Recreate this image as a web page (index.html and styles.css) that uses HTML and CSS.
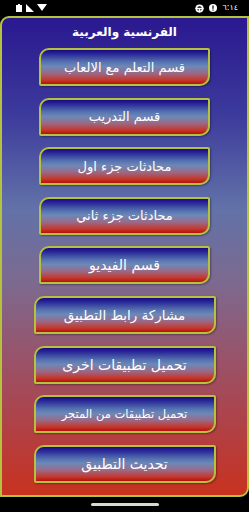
FILE: index.html
```html
<!DOCTYPE html>
<html lang="ar">
<head>
<meta charset="utf-8">
<link rel="stylesheet" href="styles.css">
</head>
<body>
<div class="status">
  <div class="st-left">
    <svg width="7" height="8" viewBox="0 0 7 8"><rect x="0" y="1" width="6" height="7" fill="#fff"/><rect x="2" y="0" width="2" height="1" fill="#fff"/></svg>
    <svg width="8" height="8" viewBox="0 0 8 8"><polygon points="0,0 0,8 8,8" fill="#fff"/></svg>
    <svg width="10" height="8" viewBox="0 0 10 8"><polygon points="0,0 10,0 5,7" fill="#fff"/></svg>
  </div>
  <div class="st-right">
    <svg width="9" height="9" viewBox="0 0 10 10"><circle cx="5" cy="5" r="4.5" fill="#fff"/><circle cx="5" cy="5" r="2.6" fill="#000"/><rect x="0.5" y="4.2" width="9" height="1.6" fill="#fff"/><rect x="4.2" y="5" width="1.6" height="4.5" fill="#fff"/></svg>
    <svg width="8" height="8" viewBox="0 0 8 8"><circle cx="4" cy="4" r="4" fill="#fff"/><rect x="3.4" y="1.5" width="1.2" height="3.3" fill="#000"/><rect x="3.4" y="5.5" width="1.2" height="1.1" fill="#000"/></svg>
    <span class="time">٦:١٤</span>
  </div>
</div>
<main class="panel">
  <h1 class="title">الفرنسية والعربية</h1>
  <div class="menu">
    <a class="btn narrow">قسم التعلم مع الالعاب</a>
    <a class="btn narrow">قسم التدريب</a>
    <a class="btn narrow">محادثات جزء اول</a>
    <a class="btn narrow">محادثات جزء ثاني</a>
    <a class="btn narrow big">قسم الفيديو</a>
    <a class="btn wide mid">مشاركة رابط التطبيق</a>
    <a class="btn wide big">تحميل تطبيقات اخرى</a>
    <a class="btn wide small">تحميل تطبيقات من المتجر</a>
    <a class="btn wide big">تحديث التطبيق</a>
  </div>
</main>
<div class="navbar"><div class="pill"></div></div>
</body>
</html>
```
FILE: styles.css
```css
html, body {
  margin: 0;
  padding: 0;
  background: #000;
  width: 249px;
  height: 512px;
  overflow: hidden;
  font-family: "DejaVu Sans", sans-serif;
}
.status {
  height: 16px;
  display: flex;
  justify-content: space-between;
  align-items: center;
  padding: 0 11px 0 16px;
  box-sizing: border-box;
}
.st-left, .st-right {
  display: flex;
  align-items: center;
  gap: 3px;
}
.st-right { gap: 5px; }
.time {
  color: #fff;
  font-size: 8px;
  line-height: 8px;
}
.panel {
  box-sizing: border-box;
  height: 481px;
  border: 2px solid #b6c23e;
  border-radius: 9px 0 9px 0;
  background: linear-gradient(to bottom, #2a188f 0%, #3c3a9c 20%, #6272a8 40%, #7c6a90 55%, #9a5268 72%, #b43e40 88%, #c8321e 100%);
  display: flex;
  flex-direction: column;
  align-items: center;
}
.title {
  margin: 0;
  height: 30px;
  display: flex;
  align-items: center;
  justify-content: center;
  color: #fff;
  font-size: 12px;
  font-weight: bold;
  padding-bottom: 2px;
  box-sizing: border-box;
}
.menu {
  display: flex;
  flex-direction: column;
  align-items: center;
  gap: 11.6px;
}
.btn {
  box-sizing: border-box;
  height: 38px;
  display: flex;
  align-items: center;
  justify-content: center;
  color: #fff;
  font-size: 13px;
  border: 2px solid #b6c23e;
  border-radius: 10px 2px 10px 2px;
  background: linear-gradient(to bottom, #180884 0%, #2a2a98 12%, #5672b0 35%, #6c88b8 48%, #9a6a88 68%, #c4382c 88%, #b8100c 100%);
  box-shadow: 1px 1px 2px rgba(0,0,0,0.35);
}
.btn.big { font-size: 14px; }
.btn.mid { font-size: 13.5px; }
.btn.small { font-size: 11.5px; }
.narrow { width: 171px; }
.wide { width: 182px; }
.navbar {
  height: 15px;
  display: flex;
  justify-content: center;
  align-items: center;
}
.pill {
  width: 68px;
  height: 2.5px;
  background: #d8d8d8;
  border-radius: 2px;
}
```
